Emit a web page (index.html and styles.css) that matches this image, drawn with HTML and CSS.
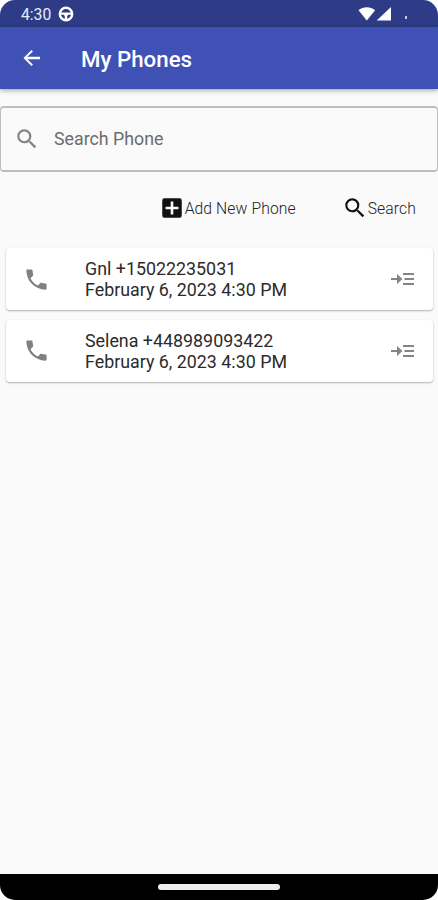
FILE: index.html
```html
<!DOCTYPE html>
<html lang="en">
<head>
    <meta charset="UTF-8">
    <meta name="viewport" content="width=device-width, initial-scale=1.0">
    <title>My Phones</title>
    <link rel="stylesheet" href="styles.css">
</head>
<body>
    <div class="phone">
        <div class="status-bar">
            <span class="time">4:30</span>
            <svg class="wheel" width="16" height="16" viewBox="0 0 16 16">
                <circle cx="8" cy="8" r="6.2" fill="none" stroke="#fff" stroke-width="2.4"/>
                <path d="M2 6.400h12v2.300H10.200L9.200 10.200V14H6.800v-3.800L5.800 8.700H2z" fill="#fff"/>
            </svg>
            <svg class="signal" width="34" height="16" viewBox="0 0 34 16">
                <path d="M0.500 4.300C4.800 0.300 12.800 0.300 17.100 4.300L8.800 14.500z" fill="#fff"/>
                <path d="M33 1v13.500H18.700z" fill="#fff"/>
            </svg>
            <span class="dot"></span>
        </div>
        <header class="app-bar">
            <svg class="back" width="24" height="24" viewBox="0 0 24 24" fill="#fff">
                <path d="M21 10.800H8.330l5.590-5.390L12.500 4l-8 8 8 8 1.410-1.410L8.330 13.200H21v-2.400z"/>
            </svg>
            <h1>My Phones</h1>
        </header>
        <main>
            <div class="search-box">
                <svg width="26" height="26" viewBox="0 0 24 24" fill="#838383">
                    <path d="M15.500 14h-.790l-.280-.270A6.471 6.471 0 0 0 16 9.500 6.500 6.500 0 1 0 9.500 16c1.610 0 3.090-.590 4.230-1.570l.270.280v.790l5 4.990L20.490 19l-4.990-5zm-6 0C7.010 14 5 11.990 5 9.500S7.010 5 9.500 5 14 7.010 14 9.500 11.990 14 9.500 14z"/>
                </svg>
                <span>Search Phone</span>
            </div>
            <div class="actions">
                <div class="action">
                    <svg width="26" height="26" viewBox="0 0 24 24" fill="#111">
                        <path d="M19 3H5a2 2 0 0 0-2 2v14a2 2 0 0 0 2 2h14a2 2 0 0 0 2-2V5a2 2 0 0 0-2-2zm-1 10.200h-4.800V18h-2.400v-4.800H6v-2.400h4.800V6h2.400v4.800H18v2.400z"/>
                    </svg>
                    <span>Add New Phone</span>
                </div>
                <div class="action">
                    <svg width="26" height="26" viewBox="0 0 24 24" fill="#111">
                        <path d="M15.500 14h-.790l-.280-.270A6.471 6.471 0 0 0 16 9.500 6.500 6.500 0 1 0 9.500 16c1.610 0 3.090-.590 4.230-1.570l.270.280v.790l5 4.990L20.490 19l-4.990-5zm-6 0C7.010 14 5 11.990 5 9.500S7.010 5 9.500 5 14 7.010 14 9.500 11.990 14 9.500 14z"/>
                    </svg>
                    <span>Search</span>
                </div>
            </div>
            <div class="card">
                <svg class="call" width="27" height="27" viewBox="0 0 24 24" fill="#808080">
                    <path d="M6.620 10.790c1.440 2.830 3.760 5.140 6.590 6.590l2.200-2.200c.270-.270.670-.360 1.020-.240 1.120.370 2.330.570 3.570.570.550 0 1 .450 1 1V20c0 .550-.450 1-1 1-9.390 0-17-7.610-17-17 0-.550.450-1 1-1h3.500c.550 0 1 .450 1 1 0 1.250.200 2.450.570 3.570.110.350.030.740-.250 1.020l-2.200 2.200z"/>
                </svg>
                <div class="info">
                    <div class="name">Gnl +15022235031</div>
                    <div class="date">February 6, 2023 4:30 PM</div>
                </div>
                <svg class="open" width="24" height="14" viewBox="0 0 24 14" fill="#858585">
                    <path d="M0 6h6V2l5.500 5L6 12V8H0z"/>
                    <path d="M12 1h11v2H12zM13.500 6H23v2h-9.500zM12 11h11v2H12z"/>
                </svg>
            </div>
            <div class="card">
                <svg class="call" width="27" height="27" viewBox="0 0 24 24" fill="#808080">
                    <path d="M6.620 10.790c1.440 2.830 3.760 5.140 6.590 6.590l2.200-2.200c.270-.270.670-.360 1.020-.240 1.120.370 2.330.570 3.570.570.550 0 1 .450 1 1V20c0 .550-.450 1-1 1-9.390 0-17-7.610-17-17 0-.550.450-1 1-1h3.500c.550 0 1 .450 1 1 0 1.250.200 2.450.570 3.570.110.350.030.740-.250 1.020l-2.200 2.200z"/>
                </svg>
                <div class="info">
                    <div class="name">Selena +448989093422</div>
                    <div class="date">February 6, 2023 4:30 PM</div>
                </div>
                <svg class="open" width="24" height="14" viewBox="0 0 24 14" fill="#858585">
                    <path d="M0 6h6V2l5.500 5L6 12V8H0z"/>
                    <path d="M12 1h11v2H12zM13.500 6H23v2h-9.500zM12 11h11v2H12z"/>
                </svg>
            </div>
        </main>
        <div class="nav-bar">
            <div class="pill"></div>
        </div>
    </div>
</body>
</html>
```
FILE: styles.css
```css
* {
    margin: 0;
    padding: 0;
    box-sizing: border-box;
}

body {
    background: white;
    font-family: Roboto, "Liberation Sans", sans-serif;
}

.phone {
    display: flex;
    flex-direction: column;
    width: 438px;
    height: 900px;
    border-radius: 15px;
    overflow: hidden;
    background: #fafafa;
}

.status-bar {
    display: flex;
    align-items: center;
    height: 27px;
    padding-left: 21px;
    background: #2e3c87;
    color: #e8eaf6;
}

.time {
    width: 37px;
    font-size: 15.7px;
    line-height: 27px;
    padding-top: 1px;
}

.signal {
    margin-left: 284px;
}

.dot {
    width: 2px;
    height: 3px;
    margin: 7px 0 0 13px;
    background: #c5cae9;
}

.app-bar {
    display: flex;
    align-items: center;
    height: 62px;
    padding-left: 19px;
    background: #3f51b5;
    color: white;
    box-shadow: 0 1px 5px rgba(0, 0, 0, 0.4);
}

.app-bar h1 {
    margin-left: 38px;
    padding-top: 2px;
    font-size: 22.3px;
    font-weight: 500;
}

main {
    flex: 1;
    padding-top: 17px;
}

.search-box {
    display: flex;
    align-items: center;
    height: 66px;
    padding-left: 13px;
    border: 2px solid #bdbdbd;
    border-width: 2px 1px;
    border-radius: 4px;
    color: #6c6c6c;
    font-size: 17.8px;
}

.search-box span {
    margin-left: 14px;
    padding-bottom: 1px;
}

.actions {
    display: flex;
    justify-content: flex-end;
    gap: 46px;
    height: 76px;
    padding: 23px 22px 0 0;
}

.action {
    display: flex;
    align-items: center;
    height: 26px;
    color: #222;
    font-size: 15.7px;
    font-weight: 300;
    letter-spacing: 0.1px;
}

.card {
    display: flex;
    align-items: center;
    height: 62px;
    margin: 0 5px 9.5px 6px;
    padding: 0 18px 0 17px;
    border-radius: 4px;
    background: white;
    box-shadow: 0 1px 2px rgba(0, 0, 0, 0.3);
}

.info {
    flex: 1;
    margin-left: 35px;
    color: #2b2b2b;
    font-size: 17.85px;
    line-height: 21px;
}

.nav-bar {
    height: 26px;
    padding-top: 10px;
    background: black;
}

.pill {
    width: 122px;
    height: 6px;
    margin-left: 158px;
    border-radius: 3px;
    background: #eee;
}
```
